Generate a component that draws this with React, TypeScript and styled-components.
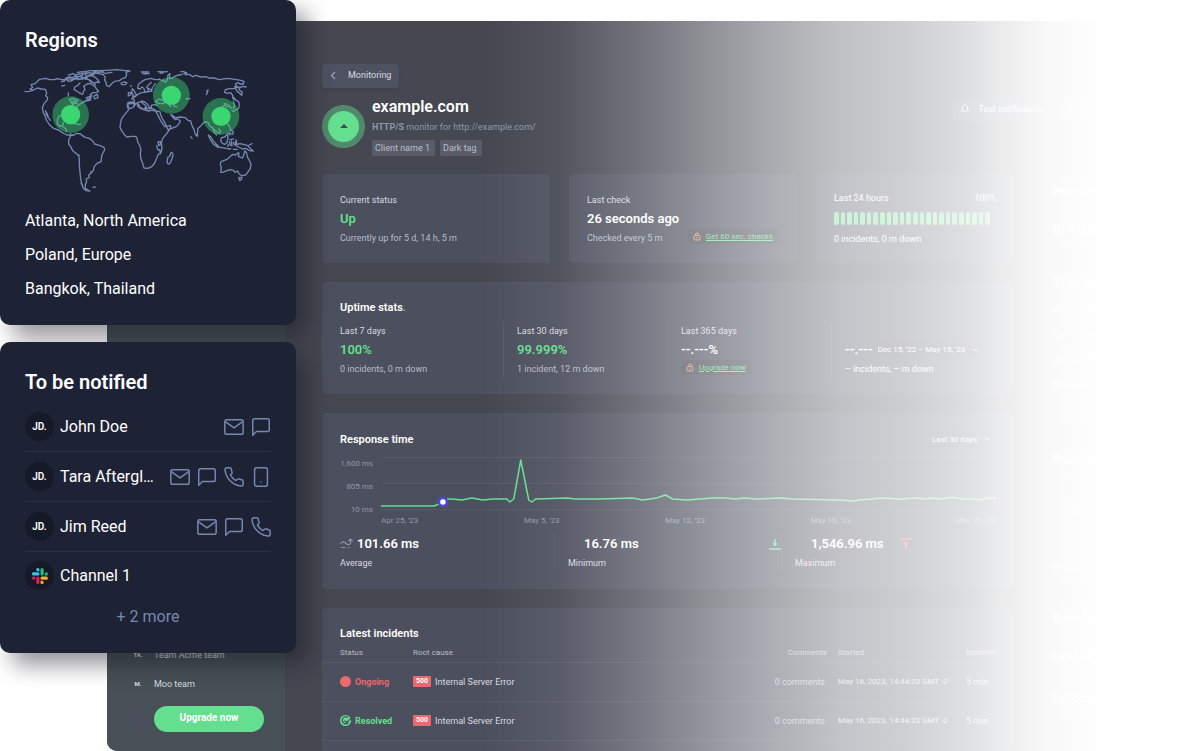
import React from "react";
import styled, { createGlobalStyle, css } from "styled-components";

const color = {
  ink: "#1e2235",
  inkDeep: "#161927",
  slate: "#7688b0",
  main: "#454751",
  side: "#465056",
  card: "#4c4f5d",
  raised: "#4d5160",
  line: "#565967",
  green: "#63df8f",
  bright: "#3bd671",
  red: "#e9696f",
  text: "#d9dae0",
  soft: "#b9bcc8",
  muted: "#8f97ae",
};

const GlobalStyle = createGlobalStyle`
  *, *::before, *::after { box-sizing: border-box; }
  body {
    margin: 0;
    background: #fff;
    font-family: Roboto, "Liberation Sans", sans-serif;
    overflow-x: hidden;
  }
  h1, h2, h3, p, ul { margin: 0; padding: 0; }
  ul { list-style: none; }
  button, select { font-family: inherit; border: 0; margin: 0; }
`;

/* ---------- page shell ---------- */

const Page = styled.div`
  position: relative;
  padding: 21px 0 0 107px;
`;

const Dashboard = styled.div`
  position: relative;
  display: flex;
  overflow: hidden;
  border-radius: 10px 0 0 10px;
  background: ${color.main};

  &::after {
    content: "";
    position: absolute;
    inset: 0;
    pointer-events: none;
    background: linear-gradient(
      90deg,
      rgba(255, 255, 255, 0) 35%,
      rgba(255, 255, 255, 0.07) 42%,
      rgba(255, 255, 255, 0.25) 50%,
      rgba(255, 255, 255, 0.38) 55%,
      rgba(255, 255, 255, 0.52) 61%,
      rgba(255, 255, 255, 0.66) 68%,
      rgba(255, 255, 255, 0.73) 74%,
      rgba(255, 255, 255, 0.82) 80%,
      rgba(255, 255, 255, 0.89) 83%,
      rgba(255, 255, 255, 0.97) 88%,
      #fff 93%
    );
  }
`;

const Sidebar = styled.nav`
  flex: 0 0 178px;
  display: flex;
  flex-direction: column;
  justify-content: flex-end;
  gap: 9px;
  padding: 0 21px 19px;
  background: ${color.side};
`;

const Team = styled.div`
  display: flex;
  align-items: center;
  gap: 6px;
  height: 20px;
  color: ${color.text};
  font-size: 9px;
`;

const TeamMark = styled.span`
  width: 20px;
  text-align: center;
  font-size: 6px;
  font-weight: 700;
`;

const SidebarAction = styled.div`
  display: flex;
  align-items: center;
  gap: 6px;
  margin-top: 3px;
`;

const Bubble = styled.span`
  width: 20px;
  height: 20px;
  border-radius: 50%;
  background: #4a4d5a;
`;

const UpgradeButton = styled.button`
  flex: 1;
  height: 26px;
  padding: 0 0 2px;
  border-radius: 13px;
  background: ${color.green};
  color: #fff;
  font-size: 10px;
  font-weight: 700;
`;

const Content = styled.main`
  flex: 1;
  min-width: 0;
  display: flex;
  flex-direction: column;
  padding: 43px 0 0 37px;
`;

const BackButton = styled.button`
  align-self: flex-start;
  display: flex;
  align-items: center;
  gap: 10px;
  height: 24px;
  padding: 0 8px 2px 7px;
  border-radius: 4px;
  background: ${color.raised};
  box-shadow: 0 2px 4px rgba(30, 34, 53, 0.08);
  color: ${color.text};
  font-size: 9px;
`;

/* ---------- monitor header ---------- */

const MonitorHeader = styled.header`
  display: flex;
  align-items: center;
  gap: 7px;
  height: 61px;
  margin: 8px 0 17px;
`;

const StatusRing = styled.span`
  display: flex;
  align-items: center;
  justify-content: center;
  width: 43px;
  height: 43px;
  border: 6px solid #50896c;
  border-radius: 50%;
  background: ${color.green};
`;

const MonitorTitle = styled.h1`
  color: #fff;
  font-size: 16px;
  font-weight: 600;
  line-height: 20px;
`;

const MonitorUrl = styled.p`
  margin-top: 2px;
  color: ${color.muted};
  font-size: 9px;
  line-height: 16px;
`;

const Tags = styled.div`
  display: flex;
  gap: 5px;
  margin-top: 5px;
`;

const Tag = styled.span`
  padding: 0 5px 0 3px;
  border-radius: 2px;
  background: #5a5c69;
  color: ${color.soft};
  font-size: 9px;
  line-height: 16px;
`;

const Actions = styled.div`
  display: flex;
  align-self: flex-start;
  gap: 8px;
  margin: 1px 59px 0 auto;
`;

const ActionButton = styled.button`
  display: flex;
  align-items: center;
  gap: 8px;
  height: 24px;
  padding: 0 10px 0 7px;
  border-radius: 4px;
  background: ${color.raised};
  color: #fff;
  font-size: 9px;
`;

/* ---------- cards ---------- */

const Columns = styled.div`
  display: flex;
  gap: 19px;
`;

const Stack = styled.div`
  flex: 1;
  min-width: 0;
  display: flex;
  flex-direction: column;
  gap: 19px;
`;

const Aside = styled.aside`
  flex: 0 0 147px;
  display: flex;
  flex-direction: column;
  gap: 19px;
`;

const SummaryRow = styled.div`
  display: grid;
  grid-template-columns: 228fr 228fr 198fr;
  gap: 19px;
`;

const Card = styled.section<{ $tall?: number }>`
  min-height: ${(p) => p.$tall ?? 89}px;
  padding: 18px 18px 16px;
  border-radius: 4px;
  background: ${color.card};
`;

const HoursCard = styled(Card)`
  padding: 15px 18px;
`;

const TableCard = styled(Card)`
  padding: 18px 0 10px;
  border-radius: 4px 4px 0 0;
`;

const CardTitle = styled.h2`
  color: #fff;
  font-size: 11px;
  font-weight: 600;
  line-height: 15px;
`;

const TableTitle = styled(CardTitle)`
  padding-left: 18px;
`;

const GreenDot = styled.span`
  color: ${color.green};
`;

const TitleRow = styled.div`
  display: flex;
  align-items: center;
  justify-content: space-between;
`;

const Label = styled.p`
  color: ${color.text};
  font-size: 9px;
  line-height: 16px;
`;

const Value = styled.p<{ $up?: boolean }>`
  color: ${(p) => (p.$up ? color.green : "#fff")};
  font-size: 13px;
  font-weight: 600;
  line-height: 21px;
`;

const Note = styled.p<{ $light?: boolean }>`
  color: ${(p) => (p.$light ? "#fff" : color.soft)};
  font-size: 9px;
  line-height: 18px;
`;

const NoteRow = styled.div`
  display: flex;
  justify-content: space-between;
`;

const Pill = styled.span`
  display: inline-flex;
  align-items: center;
  align-self: flex-start;
  gap: 5px;
  height: 15px;
  padding: 0 6px 0 5px;
  border-radius: 4px;
  background: rgba(50, 48, 52, 0.22);
`;

const PillLink = styled.a`
  color: ${color.green};
  font-size: 8px;
  text-decoration: underline;
`;

const HourBars = styled.div`
  display: flex;
  gap: 2px;
  height: 13px;
  margin: 5px 6px 5px 0;
`;

const HourBar = styled.span`
  flex: 1;
  border-radius: 3px;
  background: ${color.green};
`;

const StatGrid = styled.div<{ $cols: string; $top: number }>`
  display: grid;
  grid-template-columns: ${(p) => p.$cols};
  margin-top: ${(p) => p.$top}px;
`;

const Stat = styled.div<{ $end?: boolean }>`
  display: flex;
  flex-direction: column;
  justify-content: ${(p) => (p.$end ? "flex-end" : "flex-start")};

  & + & {
    padding-left: 13px;
    border-left: 1px solid ${color.line};
  }
`;

const RangeRow = styled.div`
  display: flex;
  align-items: center;
  gap: 3px;
`;

const SelectBox = styled.label`
  display: inline-flex;
  align-items: center;
  gap: 6px;
  height: 16px;
  padding: 0 6px 0 2px;
  border-radius: 4px;
  background: rgba(50, 48, 52, 0.14);
`;

const Select = styled.select`
  appearance: none;
  padding: 0;
  background: transparent;
  color: #fff;
  font-size: 8px;
`;

/* ---------- response chart ---------- */

const ChartRow = styled.div`
  display: flex;
  gap: 8px;
  margin-top: 10px;
`;

const YAxis = styled.div`
  flex: 0 0 33px;
  display: flex;
  flex-direction: column;
  justify-content: space-between;
  height: 59px;
  padding-top: 1px;
  color: ${color.muted};
  font-size: 8px;
  line-height: 12px;
  text-align: right;
`;

const Plot = styled.div`
  flex: 1;
  min-width: 0;
`;

const PlotSvg = styled.svg`
  display: block;
  width: 100%;
  height: 54px;
  overflow: visible;
`;

const XAxis = styled.div`
  display: flex;
  justify-content: space-between;
  margin-top: 4px;
  color: ${color.muted};
  font-size: 8px;
  line-height: 12px;
`;

const ValueLine = styled.div<{ $indent?: boolean; $spread?: boolean }>`
  display: flex;
  align-items: center;
  gap: ${(p) => (p.$indent && !p.$spread ? 16 : 4)}px;
  justify-content: ${(p) => (p.$spread ? "space-between" : "flex-start")};
  padding: 0 0 1px ${(p) => (p.$indent ? 16 : 0)}px;
`;

/* ---------- incidents ---------- */

const Table = styled.table`
  width: 100%;
  margin-top: 2px;
  border-collapse: collapse;
  table-layout: fixed;
  color: ${color.text};
  font-size: 9px;
  text-align: left;

  th {
    height: 19px;
    padding: 0;
    color: ${color.soft};
    font-size: 8px;
    font-weight: 400;
  }
  td {
    height: 39px;
    padding: 0;
  }
  tr {
    border-bottom: 1px solid ${color.line};
  }
  th:first-child,
  td:first-child {
    width: 91px;
    padding-left: 18px;
  }
`;

const Col = styled.th<{ $w: number }>`
  width: ${(p) => p.$w}px;
`;

const CommentsHead = styled(Col)`
  && {
    padding-right: 11px;
    text-align: right;
  }
`;

const CommentsCell = styled.td`
  && {
    padding-right: 13px;
    color: ${color.soft};
    text-align: right;
  }
`;

const DateCell = styled.td`
  font-size: 8px;
`;

const State = styled.span<{ $ok?: boolean }>`
  display: flex;
  align-items: center;
  gap: 4px;
  color: ${(p) => (p.$ok ? color.green : color.red)};
  font-size: 9px;
  font-weight: 700;
`;

const Cause = styled.span`
  display: flex;
  align-items: center;
  gap: 4px;
`;

const Code = styled.span`
  padding: 0 3px;
  border-radius: 1px;
  background: ${color.red};
  color: #fff;
  font-size: 7px;
  font-weight: 700;
  line-height: 11px;
`;

/* ---------- right column ---------- */

const AsideCard = styled(Card)`
  padding: 9px 0 0 20px;
`;

const AsideValue = styled(Value)`
  margin-top: 20px;
`;

const AsideNote = styled(Note)`
  margin-top: 8px;
  color: #fff;
`;

/* ---------- floating cards ---------- */

const Floating = styled.div`
  position: absolute;
  top: 0;
  left: 0;
  width: 296px;
  display: flex;
  flex-direction: column;
  gap: 17px;
`;

const floatingSurface = css`
  padding: 26px 25px 23px;
  border-radius: 10px;
  background: ${color.ink};
  box-shadow: 12px 12px 22px rgba(20, 20, 30, 0.45);
`;

const RegionsCard = styled.section`
  ${floatingSurface}
  padding-bottom: 19px;
`;

const NotifyCard = styled.section`
  ${floatingSurface}
`;

const FloatTitle = styled.h2`
  color: #fff;
  font-size: 20px;
  font-weight: 600;
  line-height: 28px;
`;

const RegionList = styled.ul`
  margin-top: 12px;
  color: #fff;
  font-size: 16px;
  line-height: 34px;
`;

const MapSvg = styled.svg`
  display: block;
  width: 100%;
  max-width: 230px;
  margin-top: 15px;
  overflow: visible;
`;

const People = styled.ul`
  margin-top: 6px;
`;

const Person = styled.li`
  display: flex;
  align-items: center;
  gap: 6px;
  height: 50px;
  border-bottom: 1px solid #2c2f40;

  &:last-child {
    height: 47px;
    border-bottom: 0;
  }
`;

const Avatar = styled.span`
  flex: none;
  display: flex;
  align-items: center;
  justify-content: center;
  width: 29px;
  height: 29px;
  border-radius: 50%;
  background: ${color.inkDeep};
  color: #fff;
  font-size: 10px;
  font-weight: 600;
`;

const PersonName = styled.span`
  color: #fff;
  font-size: 16px;
  white-space: nowrap;
`;

const Channels = styled.span`
  flex: none;
  display: flex;
  gap: 5px;
  margin: 0 -1px 0 auto;
`;

const More = styled.p`
  padding: 5px 0 0;
  color: ${color.slate};
  font-size: 16px;
  line-height: 26px;
  text-align: center;
`;

/* ---------- icons ---------- */

type ChannelKind = "mail" | "chat" | "phone" | "mobile";

const channelShapes: Record<ChannelKind, React.ReactNode> = {
  mail: (
    <>
      <rect x="2" y="4" width="20" height="16" rx="2" />
      <path d="M3 6.5l9 6.5 9-6.5" />
    </>
  ),
  chat: <path d="M21 15a2 2 0 0 1-2 2H7l-4 4V5a2 2 0 0 1 2-2h14a2 2 0 0 1 2 2z" />,
  phone: (
    <path d="M22 16.92v3a2 2 0 0 1-2.18 2 19.79 19.79 0 0 1-8.63-3.07 19.5 19.5 0 0 1-6-6 19.79 19.79 0 0 1-3.07-8.67A2 2 0 0 1 4.11 2h3a2 2 0 0 1 2 1.72 12.84 12.84 0 0 0 .7 2.81 2 2 0 0 1-.45 2.11L8.09 9.91a16 16 0 0 0 6 6l1.27-1.27a2 2 0 0 1 2.11-.45 12.84 12.84 0 0 0 2.81.7A2 2 0 0 1 22 16.92z" />
  ),
  mobile: (
    <>
      <rect x="5" y="2" width="14" height="20" rx="2" />
      <path d="M12 17.5h.01" />
    </>
  ),
};

const ChannelIcon = ({ kind }: { kind: ChannelKind }) => (
  <svg
    width="22"
    height="22"
    viewBox="0 0 24 24"
    fill="none"
    stroke={color.slate}
    strokeWidth="1.6"
    strokeLinecap="round"
    strokeLinejoin="round"
    aria-label={kind}
  >
    {channelShapes[kind]}
  </svg>
);

const SlackIcon = () => (
  <svg width="16" height="16" viewBox="0 0 54 54" aria-hidden="true">
    <path fill="#36C5F0" d="M19.7.1a5.4 5.4 0 0 0 0 10.8h5.4V5.5A5.4 5.4 0 0 0 19.7.1m0 14.4H5.3a5.4 5.4 0 0 0 0 10.8h14.4a5.4 5.4 0 0 0 0-10.8" />
    <path fill="#2EB67D" d="M53.8 19.9a5.4 5.4 0 0 0-10.8 0v5.4h5.4a5.4 5.4 0 0 0 5.4-5.4m-14.4 0V5.5a5.4 5.4 0 0 0-10.8 0v14.4a5.4 5.4 0 0 0 10.8 0" />
    <path fill="#ECB22E" d="M34 54a5.4 5.4 0 0 0 0-10.8h-5.4v5.4A5.4 5.4 0 0 0 34 54m0-14.4h14.4a5.4 5.4 0 0 0 0-10.8H34a5.4 5.4 0 0 0 0 10.8" />
    <path fill="#E01E5A" d="M0 34.2a5.4 5.4 0 0 0 10.8 0v-5.4H5.4A5.4 5.4 0 0 0 0 34.2m14.4 0v14.4a5.4 5.4 0 0 0 10.8 0V34.2a5.4 5.4 0 0 0-10.8 0" />
  </svg>
);

const LockIcon = () => (
  <svg width="8" height="9" viewBox="0 0 16 18" fill="none" stroke="#d8946a" strokeWidth="2" aria-hidden="true">
    <rect x="2" y="7" width="12" height="9" rx="2" />
    <path d="M5 7V5a3 3 0 0 1 6 0v2M8 10.5v2" strokeLinecap="round" />
  </svg>
);

const Chevron = () => (
  <svg width="6" height="4" viewBox="0 0 12 8" fill="none" stroke="#fff" strokeWidth="2" aria-hidden="true">
    <path d="M2 2l4 4 4-4" strokeLinecap="round" strokeLinejoin="round" />
  </svg>
);

const AverageIcon = () => (
  <svg width="13" height="11" viewBox="0 0 26 22" fill="none" stroke={color.muted} strokeWidth="2.4" strokeLinecap="round" aria-hidden="true">
    <path d="M2 11c3-4 6-4 9-1s7 5 10 1V3M17.500 5.500L21 2l3.500 3.500M3 19h7M17 19h1" />
  </svg>
);

const MinIcon = () => (
  <svg width="12" height="12" viewBox="0 0 24 24" fill="none" stroke={color.green} strokeWidth="3" aria-hidden="true">
    <path d="M0 22h24M12 2v10" />
    <path d="M6.500 10.500h11L12 17z" fill={color.green} stroke="none" />
  </svg>
);

const MaxIcon = () => (
  <svg width="12" height="12" viewBox="0 0 24 24" fill="none" stroke="#f0545c" strokeWidth="3" aria-hidden="true">
    <path d="M0 2h24M12 23V13" />
    <path d="M6.500 13.500h11L12 7z" fill="#f0545c" stroke="none" />
  </svg>
);

const land = [
  // North America
  "M75 272l12-1 11-3-8-4 8-5-5-8 12-3 5-5 9-8 18-3 12 4 14 0 10-3 12 3 14 0 8 5 10-2",
  "M98 268l14-7 12 3 12 1 4 10-3 9 6 6-2 8-9 10-5 13 3 14 5 9 4 13 10 15 12 10 14 5 12 8 14 7 10 0 10 1",
  "M136 330l5 7 4 12 6 9M138 338l7 12",
  "M240 246l-8 8-8 4-2 7 12 8 8 5 6 2 2-8 5-6-4-10 10-7 10-2 6 4 8 6 6 9 5 4-6 4-12 1-8 6 6 4-12 4",
  "M259 290l10-3 4 5-12 3zM283 284l9-4 2 10-10 4-2-6zM248 305l10-5 14-3M225 322l10-9 12-8 10-6M205 276v8",
  "M208 296l10-4 8 3 8 2-6 5-8-2-4 8-4-8zM216 304l2 8 6-6 8 2M172 357l4-10 8-5 10 2M172 357l0 12 8 7 8-2 2-8M190 378l8 6 2 8M212 368l14-1 8 3M236 370h6",
  // Arctic islands
  "M184 242l10-2M186 255l8-2M196 232l12-4 10 2 8-5 10 3 12-5-4-6 14 2 10-4 16 3-8 6-12-1-4 8-12-2-6 6-12-3-8 4-10-2zM206 222l14-4 8 4 12-4M232 214l16-2 12 2M254 212l18-3 22 0 16 2-16 4-14 2-12 6M214 236l10-4 12 4 12-5 10 4M262 226l14-2 10 5 8 8 4 8-8-2-8 4-8-6-6-5-8-2zM268 240l10 4 8 8M224 225l10 8M240 222l8 14M256 218l4 16",
  // Greenland and Iceland
  "M280 213l18-4 22-1 30-2 20 2 20 2-12 4 2 8-4 8-10 3-8 6-14 2-10 8-6 8-8-3-2-9-4-8 2-8-6-8-16-3zM306 214l10 3 20-3M363 246l8-3 10 2-6 6-10 0z",
  // South America
  "M212 398l-1 8-5 11 0 12 6 8 6 12 10 8 8 7 2 12 0 16 2 22 2 20 4 16 4 12 8 7 12 1-6-3-8-5 0-12 4-8-2-8 10-4-2-8 6-4 8-10 3-12 8-9 12-5 2-16 3-9 6-10-2-8-14-6-14-4-6-9-8-7-14-4-10-6-6-5-12-1-6 5-8 2",
  "M234 462l4 1M279 559l7-1M243 546l6 12M272 512l3 3",
  // Africa
  "M388 323l-6 8-10 12-8 12-2 10-2 14 5 10 8 12 8 7 14-2 12 0 4 5 2 12 6 10 4 14-2 10 1 14 6 16 4 14 12 1 12-6 8-10 6-14 4-10 10-10 2-12-2-14 4-14 12-14 12-18 0-6-18 3-4-6-8-12-8-16-8-16-8-4-12-1-14 4-10-6-8-3-2-9-12-1-18 2z",
  "M513 454l5 2 1 9-6 16-5 8-5-1-2-8 3-12 6-3zM474 423l8-1-1 9-5 3zM470 434l3 11 4 3M479 446l3 12",
  // Arabia, Persia, India
  "M482 342l6 12 8 14 8 18 10-3 16-7 10-12 0-5-8-6-6 3-8-8-6-7M516 342l10 8 14-2 16 2 8 8 8 2 4 14 6 12 4 14 5 5 2-12 0-10 10-9 10-11 8 0 6 4",
  "M589 401l4 2 0 3M572 407l4 5",
  // Europe
  "M384 305l8-2 12 1-2 6-1 8-9 4-9-1-1-8zM403 303l0-6-8-4 10-5 4-5 10-6 10-3 8 0M402 316l6-8 8-4 8-2 4 5 8 6 4 6-6 2M416 310l3 8M424 300l10 3 8 6 6 10 6 2 0-8 8-2 10 2M420 322l8 2M430 326l16 4 8-2M456 328l12 2 12 2 2 10",
  "M397 263l5 5 4 8 4 8-12 3 1-7-4-4zM385 276l7-2 0 8-7 3zM413 262l2-12 10-8 10-6 18-4 12 4 14 0M413 262l8 2 4-6 6 3 4 12 8-1 2-7-5-6 6-8 8-7M438 273l12-2 6 0M446 262l8 6 4-8M460 256l6-8M392 254l2 2M486 240l-8-6M466 302l12-8 10 4 8 4-6 6-14-1zM500 292l8 8-3 10 8 7M520 303l2 12 8 3",
  "M424 213h22M428 218h20M436 220l4-6M474 212h12M488 213l14-1M480 216h8",
  // Northern and eastern Asia
  "M488 236l8 8 6-8 2-14 6-4-2 14 8 0 8-6 12-4 10-1M543 212l8 0 10 4-10 2M556 221l14 0 8 6 10-4 14 5 16-1 8 4 16 0 16 5 18-3 12 0 22 3 12 2 10 3-2 8-10 0-6-4-8 4 4 6-6 2M738 258l-10-2-8 4-10-2-8 5-14 0-12 3-2 8 8 3 10-2 6 8 0 8 4 6M707 262l4 9 6 4 8 8 2-9-8-6-4-10",
  "M620 270l4-3-2 8-3 6M558 294l12-1M702 290l6 8 8 4 2 8-2 12-8 4-8 5-4-2M700 302l4 12-4 8M664 318l10-6 8 6 6-4 6 8M672 308l12 2",
  // South-east Asia
  "M626 372l8 6 6 4 2 12 8 8M640 384l10 8 8 6 4-6-6-8M684 370l6 10 2 8M692 386l8 6-2 8-8-4M684 396l6 6M625 402l8 6 6 10 10 12 6 6-6 0-10-8-8-12zM652 438l14 2 12 2 14 2M700 445h12M664 410l10-2 8-8 2 12-4 14-6 4-8-4-4-8zM690 416l10-2M688 422l4 12M694 420l2 14M686 430l-3 6M700 424l4 8M708 416l2 8",
  "M706 422l6 8 8-2 10 2 14 4 6 8 10 8-14-2-8-6-10 2-12-6-8-4zM748 432l8-4",
  // Australia
  "M662 514l2-14-3-10 2-8 16-6 8-6 6-6 6-4 8 2 6-6 4 0-2 10 12 5 4-8 3-13 6 6 2 12 6 10 5 12-2 12-8 12-6 8-12 2-8-6-4-8-8 4-4-6-10-2-14 4-8 4zM716 530l10-1-2 7-5 3z",
].join("");

const pins: [number, number][] = [
  [212, 341],
  [514, 283],
  [663, 346],
];

const WorldMap = () => (
  <MapSvg viewBox="75 204 690 370" role="img" aria-label="World map of monitoring regions">
    <path d={land} fill="none" stroke={color.slate} strokeWidth="4" strokeLinejoin="round" strokeLinecap="round" />
    {pins.map(([x, y]) => (
      <g key={x} fill={color.bright}>
        <circle cx={x} cy={y} r="55" opacity="0.450" />
        <circle cx={x} cy={y} r="29" />
      </g>
    ))}
  </MapSvg>
);

const responseLine =
  "0,49 53,49 61,46 67,42 71,42 81,43 91,41 102,43 112,42 126,42 129,45 133,42 140,3 148,43 151,45 155,42 187,41 194,42 219,42 252,41 262,43 276,41 285,38 292,42 307,43 332,41 344,41 355,42 364,41 376,42 401,41 411,42 459,43 474,44 479,43 492,42 501,41 519,42 537,41 545,42 552,41 561,42 572,40 582,42 596,42 601,43 607,41 616,41";

/* ---------- data ---------- */

const people: { name: string; channels: ChannelKind[] }[] = [
  { name: "John Doe", channels: ["mail", "chat"] },
  { name: "Tara Aftergl…", channels: ["mail", "chat", "phone", "mobile"] },
  { name: "Jim Reed", channels: ["mail", "chat", "phone"] },
];

const incidents = [
  { state: "Ongoing", ok: false },
  { state: "Resolved", ok: true },
];

const Incidents = () => (
  <TableCard>
    <TableTitle>Latest incidents</TableTitle>
    <Table>
      <thead>
        <tr>
          <th>Status</th>
          <th>Root cause</th>
          <CommentsHead $w={70}>Comments</CommentsHead>
          <Col $w={128}>Started</Col>
          <Col $w={48}>Duration</Col>
        </tr>
      </thead>
      <tbody>
        {incidents.map(({ state, ok }) => (
          <tr key={state}>
            <td>
              <State $ok={ok}>
                <svg width="11" height="11" viewBox="0 0 22 22" aria-hidden="true">
                  <circle cx="11" cy="11" r="11" fill={ok ? color.green : color.red} />
                  {ok && (
                    <path
                      d="M22 7l-9 8-4-4M16 5a7 7 0 1 0 1 10"
                      fill="none"
                      stroke={color.card}
                      strokeWidth="2.400"
                    />
                  )}
                </svg>
                {state}
              </State>
            </td>
            <td>
              <Cause>
                <Code>500</Code>
                Internal Server Error
              </Cause>
            </td>
            <CommentsCell>0 comments</CommentsCell>
            <DateCell>May 16, 2023, 14:44:23 GMT -2</DateCell>
            <td>5 min</td>
          </tr>
        ))}
      </tbody>
    </Table>
  </TableCard>
);

export default function App() {
  return (
    <>
      <GlobalStyle />
      <Page>
        <Dashboard>
          <Sidebar>
            <Team>
              <TeamMark>TA.</TeamMark>Team Acme team
            </Team>
            <Team>
              <TeamMark>M.</TeamMark>Moo team
            </Team>
            <SidebarAction>
              <Bubble />
              <UpgradeButton>Upgrade now</UpgradeButton>
            </SidebarAction>
          </Sidebar>

          <Content>
            <BackButton>
              <svg width="9" height="9" viewBox="0 0 18 18" fill="none" stroke="#9aa6c4" strokeWidth="2.400" aria-hidden="true">
                <path d="M12 2L5 9l7 7" />
              </svg>
              Monitoring
            </BackButton>

            <MonitorHeader>
              <StatusRing>
                <svg width="8" height="5" viewBox="0 0 16 10" aria-hidden="true">
                  <path d="M8 0l8 8H0z" fill={color.main} />
                </svg>
              </StatusRing>
              <div>
                <MonitorTitle>example.com</MonitorTitle>
                <MonitorUrl>
                  <b>HTTP/S</b> monitor for http://example.com/
                </MonitorUrl>
                <Tags>
                  <Tag>Client name 1</Tag>
                  <Tag>Dark tag</Tag>
                </Tags>
              </div>
              <Actions>
                <ActionButton>
                  <svg width="10" height="10" viewBox="0 0 24 24" fill="none" stroke="#fff" strokeWidth="2" aria-hidden="true">
                    <path d="M18 8A6 6 0 0 0 6 8c0 7-3 9-3 9h18s-3-2-3-9M13.700 21a2 2 0 0 1-3.400 0" />
                  </svg>
                  Test notification
                </ActionButton>
                <ActionButton>
                  <svg width="10" height="10" viewBox="0 0 24 24" fill="none" stroke="#fff" strokeWidth="2" aria-hidden="true">
                    <circle cx="12" cy="12" r="10" />
                    <path d="M10 8v8M14 8v8" />
                  </svg>
                  Pause
                </ActionButton>
              </Actions>
            </MonitorHeader>

            <Columns>
              <Stack>
                <SummaryRow>
                  <Card>
                    <Label>Current status</Label>
                    <Value $up>Up</Value>
                    <Note>Currently up for 5 d, 14 h, 5 m</Note>
                  </Card>
                  <Card>
                    <Label>Last check</Label>
                    <Value>26 seconds ago</Value>
                    <NoteRow>
                      <Note>Checked every 5 m</Note>
                      <Pill>
                        <LockIcon />
                        <PillLink href="#checks">Get 60 sec. checks</PillLink>
                      </Pill>
                    </NoteRow>
                  </Card>
                  <HoursCard>
                    <TitleRow>
                      <Note $light>Last 24 hours</Note>
                      <Note $light>100%</Note>
                    </TitleRow>
                    <HourBars>
                      {Array.from({ length: 24 }, (_, i) => (
                        <HourBar key={i} />
                      ))}
                    </HourBars>
                    <Note $light>0 incidents, 0 m down</Note>
                  </HoursCard>
                </SummaryRow>

                <Card $tall={112}>
                  <CardTitle>
                    Uptime stats<GreenDot>.</GreenDot>
                  </CardTitle>
                  <StatGrid $cols="163fr 164fr 164fr 165fr" $top={8}>
                    <Stat>
                      <Label>Last 7 days</Label>
                      <Value $up>100%</Value>
                      <Note>0 incidents, 0 m down</Note>
                    </Stat>
                    <Stat>
                      <Label>Last 30 days</Label>
                      <Value $up>99.999%</Value>
                      <Note>1 incident, 12 m down</Note>
                    </Stat>
                    <Stat>
                      <Label>Last 365 days</Label>
                      <Value>--.---%</Value>
                      <Pill>
                        <LockIcon />
                        <PillLink href="#upgrade">Upgrade now</PillLink>
                      </Pill>
                    </Stat>
                    <Stat $end>
                      <RangeRow>
                        <Value>--.---</Value>
                        <SelectBox>
                          <Select aria-label="Date range">
                            <option>Dec 15, '22 – May 15, '23</option>
                          </Select>
                          <Chevron />
                        </SelectBox>
                      </RangeRow>
                      <Note $light>– incidents, – m down</Note>
                    </Stat>
                  </StatGrid>
                </Card>

                <Card $tall={176}>
                  <TitleRow>
                    <CardTitle>Response time</CardTitle>
                    <SelectBox>
                      <Select aria-label="Response time period">
                        <option>Last 30 days</option>
                      </Select>
                      <Chevron />
                    </SelectBox>
                  </TitleRow>
                  <ChartRow>
                    <YAxis>
                      <span>1,600 ms</span>
                      <span>805 ms</span>
                      <span>10 ms</span>
                    </YAxis>
                    <Plot>
                      <PlotSvg viewBox="0 0 616 54" preserveAspectRatio="none" role="img" aria-label="Response time chart">
                        <path d="M0 .5H616M0 26.500H616M0 52.500H616" stroke={color.line} />
                        <polyline points={responseLine} fill="none" stroke={color.green} strokeWidth="1.500" strokeLinejoin="round" />
                        <circle cx="62" cy="45" r="4" fill="#fff" stroke="#4f46d8" strokeWidth="2.500" />
                      </PlotSvg>
                      <XAxis>
                        <span>Apr 25, '23</span>
                        <span>May 5, '23</span>
                        <span>May 12, '23</span>
                        <span>May 18, '23</span>
                        <span>May 25, '23</span>
                      </XAxis>
                    </Plot>
                  </ChartRow>
                  <StatGrid $cols="214fr 227fr 215fr" $top={6}>
                    <Stat>
                      <ValueLine>
                        <AverageIcon />
                        <Value>101.66 ms</Value>
                      </ValueLine>
                      <Label>Average</Label>
                    </Stat>
                    <Stat>
                      <ValueLine $indent $spread>
                        <Value>16.76 ms</Value>
                        <MinIcon />
                      </ValueLine>
                      <Label>Minimum</Label>
                    </Stat>
                    <Stat>
                      <ValueLine $indent>
                        <Value>1,546.96 ms</Value>
                        <MaxIcon />
                      </ValueLine>
                      <Label>Maximum</Label>
                    </Stat>
                  </StatGrid>
                </Card>

                <Incidents />
              </Stack>

              <Aside>
                <AsideCard $tall={74}>
                  <CardTitle>Next maintenance.</CardTitle>
                  <AsideValue>In 3 days</AsideValue>
                </AsideCard>
                <AsideCard $tall={157}>
                  <CardTitle>To be notified.</CardTitle>
                  {[...people.map((p) => p.name), "Channel 1"].map((name) => (
                    <AsideNote key={name}>{name}</AsideNote>
                  ))}
                </AsideCard>
                <AsideCard $tall={140}>
                  <CardTitle>Regions.</CardTitle>
                  <WorldMap />
                  <AsideNote>Atlanta</AsideNote>
                </AsideCard>
                <AsideCard $tall={120}>
                  <CardTitle>Domain &amp; SSL.</CardTitle>
                  <AsideValue>Unlock</AsideValue>
                  <AsideValue>Unlock</AsideValue>
                </AsideCard>
              </Aside>
            </Columns>
          </Content>
        </Dashboard>

        <Floating>
          <RegionsCard>
            <FloatTitle>Regions</FloatTitle>
            <WorldMap />
            <RegionList>
              <li>Atlanta, North America</li>
              <li>Poland, Europe</li>
              <li>Bangkok, Thailand</li>
            </RegionList>
          </RegionsCard>
          <NotifyCard>
            <FloatTitle>To be notified</FloatTitle>
            <People>
              {people.map(({ name, channels }) => (
                <Person key={name}>
                  <Avatar>JD.</Avatar>
                  <PersonName>{name}</PersonName>
                  <Channels>
                    {channels.map((kind) => (
                      <ChannelIcon key={kind} kind={kind} />
                    ))}
                  </Channels>
                </Person>
              ))}
              <Person>
                <Avatar>
                  <SlackIcon />
                </Avatar>
                <PersonName>Channel 1</PersonName>
              </Person>
            </People>
            <More>+ 2 more</More>
          </NotifyCard>
        </Floating>
      </Page>
    </>
  );
}
